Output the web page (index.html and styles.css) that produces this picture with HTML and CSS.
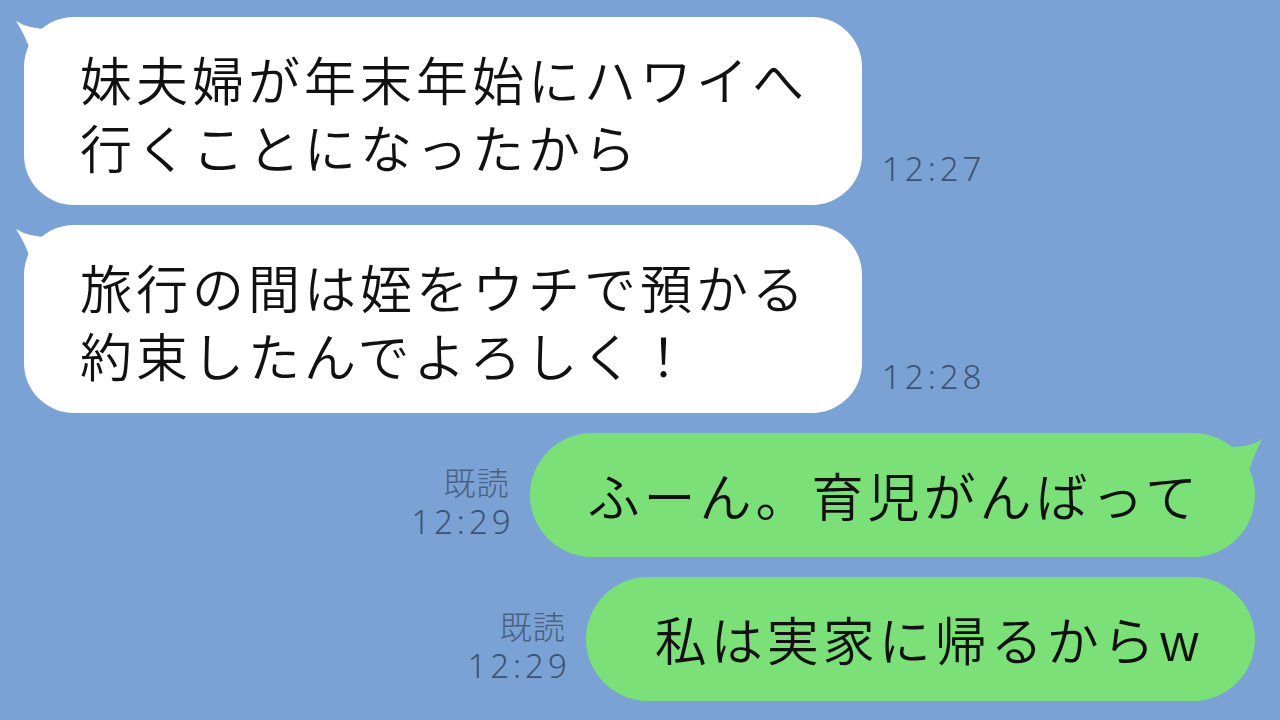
FILE: index.html
```html
<!DOCTYPE html>
<html lang="ja">
<head>
<meta charset="utf-8">
<title>chat</title>
<link rel="stylesheet" href="styles.css">
</head>
<body>
<div class="chat">
  <div class="row left">
    <div class="bubble white">
      <svg class="tail tail-left" width="50" height="50" viewBox="0 0 50 50"><path d="M2 4 Q14 12 36 12 L44 44 L16 33 Q11 18 2 4 Z" fill="#ffffff"/></svg>
      妹夫婦が年末年始にハワイへ<br>行くことになったから
    </div>
    <div class="time">12:27</div>
  </div>
  <div class="row left">
    <div class="bubble white">
      <svg class="tail tail-left" width="50" height="50" viewBox="0 0 50 50"><path d="M2 4 Q14 12 36 12 L44 44 L16 33 Q11 18 2 4 Z" fill="#ffffff"/></svg>
      旅行の間は姪をウチで預かる<br>約束したんでよろしく！
    </div>
    <div class="time">12:28</div>
  </div>
  <div class="row right">
    <div class="meta">
      <div class="read">既読</div>
      <div class="time">12:29</div>
    </div>
    <div class="bubble green g1">
      <svg class="tail tail-right" width="50" height="50" viewBox="0 0 50 50"><path d="M47 6 Q36 14 17 14 L5 40 L35 35 Q39 22 47 6 Z" fill="#7be078"/></svg>
      ふーん。育児がんばって
    </div>
  </div>
  <div class="row right">
    <div class="meta">
      <div class="read">既読</div>
      <div class="time">12:29</div>
    </div>
    <div class="bubble green g2">私は実家に帰るからw</div>
  </div>
</div>
</body>
</html>
```

FILE: styles.css
```css
html, body {
  margin: 0;
  padding: 0;
}
body {
  width: 1280px;
  height: 720px;
  overflow: hidden;
  background: #7aa2d4;
  font-family: "Noto Sans CJK JP", "Noto Sans", sans-serif;
}
.chat {
  display: flex;
  flex-direction: column;
  gap: 20px;
  padding: 17px 25px 0 24px;
}
.row {
  display: flex;
  align-items: flex-end;
  gap: 20px;
}
.row.right {
  justify-content: flex-end;
}
.bubble {
  position: relative;
  font-size: 52px;
  font-weight: 350;
  line-height: 68px;
  letter-spacing: 4px;
  color: #111111;
  white-space: nowrap;
}
.white {
  background: #ffffff;
  border-radius: 50px;
  padding: 28px 54px 24px 56px;
}
.green {
  background: #7be078;
  border-radius: 62px;
  padding: 28px 54px 28px 58px;
}
.g2 {
  padding-left: 69px;
  padding-right: 51px;
}
.tail {
  position: absolute;
  top: 0;
}
.tail-left {
  left: -10px;
}
.tail-right {
  right: -10px;
}
.time {
  font-family: "Noto Sans", sans-serif;
  font-size: 33px;
  font-weight: 300;
  line-height: 42px;
  letter-spacing: 4px;
  color: #3d5274;
  margin-bottom: 15px;
}
.meta {
  display: flex;
  flex-direction: column;
  align-items: flex-end;
  margin-bottom: 14px;
}
.meta .time {
  margin-bottom: 0;
  margin-right: -5px;
}
.read {
  font-size: 32px;
  font-weight: 300;
  line-height: 40px;
  letter-spacing: 1px;
  color: #4b5f80;
}
```
